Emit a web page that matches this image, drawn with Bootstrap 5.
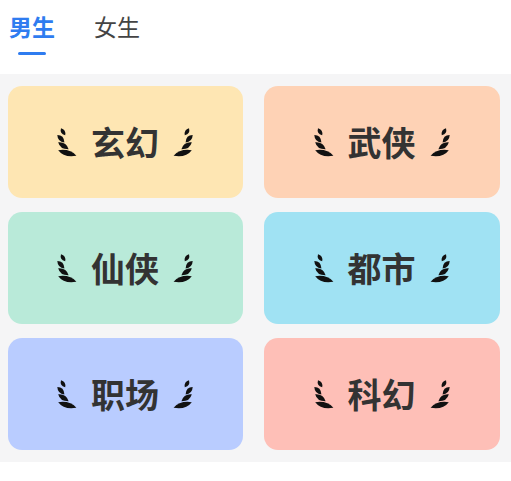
<!DOCTYPE html>
<html lang="zh-CN">
<head>
<meta charset="utf-8">
<title>分类</title>
<link href="https://cdn.jsdelivr.net/npm/bootstrap@5.3.0/dist/css/bootstrap.min.css" rel="stylesheet">
<style>
html,body{height:100%;background:#fff;font-family:"Noto Sans CJK SC",sans-serif;}
.tabbar{height:74px;padding-left:9px;gap:39px;}
.tabitem{font-size:23px;line-height:30px;color:#444;padding-top:11px;position:relative;text-decoration:none;width:46px;white-space:nowrap;}
.tabitem.sel{color:#2f7cf0;font-weight:700;}
.tabitem.sel::after{content:"";position:absolute;left:9px;top:52px;width:28px;height:3px;border-radius:2px;background:#2f7cf0;}
.panel{background:#f5f5f6;padding:12px 11px 12px 8px;display:grid;grid-template-columns:235px 236px;column-gap:21px;row-gap:14px;}
.tile{height:112px;border-radius:14px;gap:14px;padding-right:1px;font-size:34px;font-weight:700;color:#333;line-height:1;}
.wing{width:20px;height:30px;flex:none;}
.wing.flip{transform:scaleX(-1);}
.c1{background:#fee6b3;}.c2{background:#fed2b5;}.c3{background:#b9ead9;}
.c4{background:#a0e2f3;}.c5{background:#b9ccff;}.c6{background:#febfb7;}
</style>
</head>
<body>
<svg width="0" height="0" class="position-absolute">
<symbol id="leafs" viewBox="0 0 20 30">
<path fill="#111" d="M4 1.2Q9.2 2.5 8.2 8.2Q2.4 6.5 4 1.2Z"/>
<path fill="#111" d="M.3 8Q7 8 7.4 15.4Q.6 14.6 .3 8Z"/>
<path fill="#111" d="M1.2 15.2Q9.4 14.6 11.6 22.2Q3 22.4 1.2 15.2Z"/>
<path fill="#111" d="M1.2 23.2Q13 21.4 19.4 28.8Q7 31 1.2 23.2Z"/>
</symbol>
</svg>
<div class="d-flex tabbar">
<a class="tabitem sel" href="#">男生</a>
<a class="tabitem" href="#">女生</a>
</div>
<div class="panel">
<div class="tile c1 d-flex align-items-center justify-content-center"><svg class="wing"><use href="#leafs"/></svg><span>玄幻</span><svg class="wing flip"><use href="#leafs"/></svg></div>
<div class="tile c2 d-flex align-items-center justify-content-center"><svg class="wing"><use href="#leafs"/></svg><span>武侠</span><svg class="wing flip"><use href="#leafs"/></svg></div>
<div class="tile c3 d-flex align-items-center justify-content-center"><svg class="wing"><use href="#leafs"/></svg><span>仙侠</span><svg class="wing flip"><use href="#leafs"/></svg></div>
<div class="tile c4 d-flex align-items-center justify-content-center"><svg class="wing"><use href="#leafs"/></svg><span>都市</span><svg class="wing flip"><use href="#leafs"/></svg></div>
<div class="tile c5 d-flex align-items-center justify-content-center"><svg class="wing"><use href="#leafs"/></svg><span>职场</span><svg class="wing flip"><use href="#leafs"/></svg></div>
<div class="tile c6 d-flex align-items-center justify-content-center"><svg class="wing"><use href="#leafs"/></svg><span>科幻</span><svg class="wing flip"><use href="#leafs"/></svg></div>
</div>
<script src="https://cdn.jsdelivr.net/npm/bootstrap@5.3.0/dist/js/bootstrap.bundle.min.js"></script>
</body>
</html>
